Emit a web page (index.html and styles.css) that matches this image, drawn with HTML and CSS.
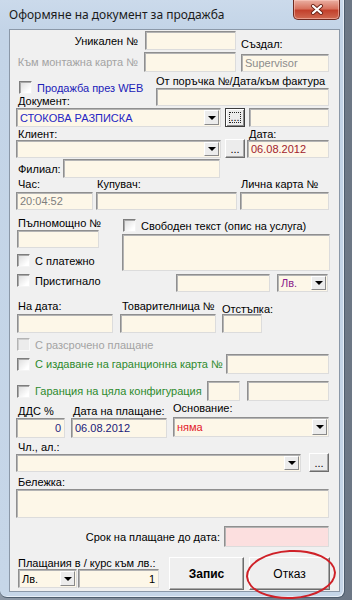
FILE: index.html
```html
<!DOCTYPE html>
<html lang="bg">
<head>
    <meta charset="UTF-8">
    <title>Оформяне на документ за продажба</title>
    <link rel="stylesheet" href="styles.css">
</head>
<body>
    <div class="window">
        <div class="titlebar">
            <span class="title">Оформяне на документ за продажба</span>
            <div class="close-btn">
                <svg width="14" height="11" viewBox="0 0 14 11">
                    <path d="M3 2 L11 9 M11 2 L3 9" stroke="#6b2418" stroke-width="4" stroke-linecap="round"/>
                    <path d="M3 2 L11 9 M11 2 L3 9" stroke="#fff" stroke-width="2.2" stroke-linecap="round"/>
                </svg>
            </div>
        </div>

        <div class="client">
            <div class="row row-unique">
                <span class="lbl lbl-unique">Уникален №</span>
                <div class="inp in-unique"></div>
                <span class="lbl lbl-created">Създал:</span>
            </div>

            <div class="row row-mount">
                <span class="lbl lbl-mount">Към монтажна карта №</span>
                <div class="inp in-mount"></div>
                <div class="inp in-user">Supervisor</div>
            </div>

            <div class="row row-web">
                <div class="web-col">
                    <div class="chk-line chk-web">
                        <span class="chk"></span>
                        <span class="lbl txt-blue">Продажба през WEB</span>
                    </div>
                    <div class="lbl lbl-doc">Документ:</div>
                </div>
                <div class="order-col">
                    <span class="lbl lbl-order">От поръчка №/Дата/към фактура</span>
                    <div class="inp in-order"></div>
                </div>
            </div>

            <div class="row row-doc">
                <div class="inp combo cmb-doc">
                    <span class="combo-text txt-doc">СТОКОВА РАЗПИСКА</span>
                    <span class="combo-arrow"></span>
                </div>
                <div class="btn3d btn-focus btn-doc"><span>...</span></div>
                <div class="inp in-doc"></div>
            </div>

            <div class="row row-lbl row-client-lbl">
                <span class="lbl lbl-client">Клиент:</span>
                <span class="lbl">Дата:</span>
            </div>

            <div class="row row-client">
                <div class="inp combo cmb-client">
                    <span class="combo-text"></span>
                    <span class="combo-arrow"></span>
                </div>
                <div class="btn3d btn-client">...</div>
                <div class="inp in-date">06.08.2012</div>
            </div>

            <div class="row row-branch">
                <span class="lbl lbl-branch">Филиал:</span>
                <div class="inp in-branch"></div>
            </div>

            <div class="row row-lbl">
                <span class="lbl lbl-time">Час:</span>
                <span class="lbl lbl-buyer">Купувач:</span>
                <span class="lbl">Лична карта №</span>
            </div>

            <div class="row row-time">
                <div class="inp in-time">20:04:52</div>
                <div class="inp in-buyer"></div>
                <div class="inp in-id"></div>
            </div>

            <div class="row row-proxy">
                <div class="proxy-col">
                    <div class="lbl lbl-proxy">Пълномощно №</div>
                    <div class="inp in-proxy"></div>
                    <div class="chk-line chk-payment">
                        <span class="chk"></span>
                        <span class="lbl">С платежно</span>
                    </div>
                    <div class="chk-line chk-arrived">
                        <span class="chk"></span>
                        <span class="lbl">Пристигнало</span>
                    </div>
                </div>
                <div class="free-col">
                    <div class="chk-line chk-free">
                        <span class="chk"></span>
                        <span class="lbl">Свободен текст (опис на услуга)</span>
                    </div>
                    <div class="inp txt-free"></div>
                    <div class="row row-amount">
                        <div class="inp in-amount"></div>
                        <div class="inp combo cmb-cur">
                            <span class="combo-text txt-purple">Лв.</span>
                            <span class="combo-arrow"></span>
                        </div>
                    </div>
                </div>
            </div>

            <div class="row row-lbl row-ship-lbl">
                <span class="lbl lbl-ondate">На дата:</span>
                <span class="lbl lbl-waybill">Товарителница №</span>
                <span class="lbl lbl-disc">Отстъпка:</span>
            </div>

            <div class="row row-ship">
                <div class="inp in-ondate"></div>
                <div class="inp in-waybill"></div>
                <div class="inp in-disc"></div>
            </div>

            <div class="row row-install">
                <div class="chk-line">
                    <span class="chk chk-off"></span>
                    <span class="lbl txt-gray">С разсрочено плащане</span>
                </div>
            </div>

            <div class="row row-warranty">
                <div class="chk-line">
                    <span class="chk"></span>
                    <span class="lbl txt-green">С издаване на гаранционна карта №</span>
                </div>
                <div class="inp in-warranty"></div>
            </div>

            <div class="row row-config">
                <div class="chk-line">
                    <span class="chk"></span>
                    <span class="lbl txt-green">Гаранция на цяла конфигурация</span>
                </div>
                <div class="inp in-cfg1"></div>
                <div class="inp in-cfg2"></div>
            </div>

            <div class="row row-lbl row-vat-lbl">
                <span class="lbl lbl-vat">ДДС %</span>
                <span class="lbl lbl-paydate">Дата на плащане:</span>
                <span class="lbl lbl-basis">Основание:</span>
            </div>

            <div class="row row-vat">
                <div class="inp in-vat">0</div>
                <div class="inp in-paydate">06.08.2012</div>
                <div class="inp combo cmb-basis">
                    <span class="combo-text txt-red">няма</span>
                    <span class="combo-arrow"></span>
                </div>
            </div>

            <div class="row row-lbl row-art-lbl">
                <span class="lbl lbl-indent">Чл., ал.:</span>
            </div>

            <div class="row row-art">
                <div class="inp combo cmb-art">
                    <span class="combo-text"></span>
                    <span class="combo-arrow"></span>
                </div>
                <div class="btn3d btn-art">...</div>
            </div>

            <div class="row row-lbl row-note-lbl">
                <span class="lbl lbl-indent">Бележка:</span>
            </div>

            <div class="inp txt-note"></div>

            <div class="row row-due">
                <span class="lbl lbl-due">Срок на плащане до дата:</span>
                <div class="inp in-due"></div>
            </div>

            <div class="row row-bottom">
                <div class="rate-col">
                    <div class="lbl lbl-rate">Плащания в / курс към лв.:</div>
                    <div class="row rate-line">
                        <div class="inp combo cmb-rate">
                            <span class="combo-text">Лв.</span>
                            <span class="combo-arrow"></span>
                        </div>
                        <div class="inp in-rate">1</div>
                    </div>
                </div>
                <div class="btn3d btn-save">Запис</div>
                <div class="btn3d btn-cancel">Отказ</div>
            </div>
        </div>
    </div>

    <div class="mark"></div>
</body>
</html>
```

FILE: styles.css
```css
* {
    margin: 0;
    padding: 0;
    box-sizing: border-box;
}

body {
    width: 352px;
    height: 600px;
    overflow: hidden;
    position: relative;
    background: linear-gradient(90deg, #8d98a6 0%, #6c7785 100%);
    font-family: "Liberation Sans", Arial, sans-serif;
    font-size: 11px;
    color: #000;
}

/* window frame */

.window {
    width: 345px;
    height: 598px;
    background: linear-gradient(180deg, #cbdaeb 0%, #c3d4e7 30px, #c6d6e8 100%);
    border-right: 1px solid #4e5d6d;
    border-bottom: 1px solid #4e5d6d;
    border-radius: 0 0 7px 7px;
    box-shadow: inset -1px -1px 0 #e6eef7;
}

.titlebar {
    height: 29px;
    display: flex;
    align-items: flex-start;
}

.title {
    margin: 6px 0 0 9px;
    font-family: "Noto Sans", "Liberation Sans", sans-serif;
    font-size: 12px;
    color: #1b1b1b;
}

.close-btn {
    margin-left: auto;
    margin-right: 4px;
    width: 47px;
    height: 20px;
    display: flex;
    align-items: center;
    justify-content: center;
    background: linear-gradient(180deg, #eab0a3 0%, #d8735f 45%, #c2412c 55%, #d06a52 100%);
    border: 1px solid #6f2a20;
    border-top: none;
    border-radius: 0 0 5px 5px;
    box-shadow: inset 0 0 0 1px rgba(255, 210, 200, 0.5);
}

.client {
    margin-left: 9px;
    width: 331px;
    height: 563px;
    padding: 0 10px 0 6px;
    background: #f0f0f0;
    border: 1px solid #8b98a8;
}

/* common controls */

.row {
    display: flex;
    align-items: flex-start;
}

.row > *,
.web-col > *,
.proxy-col > *,
.free-col > * {
    flex-shrink: 0;
}

.lbl {
    display: block;
    height: 12px;
    line-height: 12px;
    white-space: nowrap;
}

.inp {
    display: flex;
    align-items: center;
    height: 100%;
    padding: 0 3px;
    background: #fdf7e8;
    border: 1px solid;
    border-color: #8f8f8f #dcdcdc #dcdcdc #8f8f8f;
    box-shadow: inset 1px 1px 0 #b4b4b4;
    white-space: nowrap;
}

.combo {
    padding-right: 1px;
}

.combo-text {
    flex: 1;
}

.combo-arrow {
    width: 15px;
    height: calc(100% - 2px);
    display: flex;
    align-items: center;
    justify-content: center;
    background: #ececec;
    border: 1px solid;
    border-color: #fff #8a8a8a #8a8a8a #fff;
}

.combo-arrow::after {
    content: "";
    border-left: 4px solid transparent;
    border-right: 4px solid transparent;
    border-top: 4px solid #000;
}

.btn3d {
    display: flex;
    align-items: center;
    justify-content: center;
    background: #ececec;
    border: 1px solid;
    border-color: #fff #6d6d6d #6d6d6d #fff;
    box-shadow: inset -1px -1px 0 #a8a8a8;
}

.btn-focus {
    border-color: #3c3c3c;
    box-shadow: inset 1px 1px 0 #fff, inset -1px -1px 0 #8a8a8a;
    padding: 3px;
}

.btn-focus span {
    width: 100%;
    height: 100%;
    display: flex;
    align-items: flex-end;
    justify-content: center;
    line-height: 10px;
    border: 1px dotted #222;
}

.chk-line {
    display: flex;
    align-items: center;
    height: 13px;
}

.chk {
    display: block;
    width: 13px;
    height: 13px;
    margin-right: 5px;
    background: linear-gradient(135deg, #dcdcdc 0%, #fff 80%);
    border: 1px solid;
    border-color: #7d7d7d #f4f4f4 #f4f4f4 #7d7d7d;
    box-shadow: inset 1px 1px 0 #a9a9a9;
}

.chk-off {
    background: #ececec;
    border-color: #b4b4b4 #f8f8f8 #f8f8f8 #b4b4b4;
    box-shadow: inset 1px 1px 0 #cfcfcf;
}

.txt-blue { color: #2020b8; }
.txt-doc { color: #2626c4; }
.txt-gray { color: #a3a3a3; }
.txt-green { color: #2d8a2d; }
.txt-purple { color: #8b1c8b; }
.txt-red { color: #e2202a; }

/* rows */

.row-lbl {
    height: 12px;
}

.row-unique {
    margin-top: 1px;
    height: 19px;
}

.lbl-unique {
    width: 122px;
    text-align: right;
    align-self: center;
}

.in-unique {
    width: 91px;
    margin-left: 7px;
}

.lbl-created {
    margin-left: 5px;
    align-self: flex-end;
}

.row-mount {
    margin-top: 2px;
    height: 20px;
}

.lbl-mount {
    width: 122px;
    text-align: right;
    align-self: center;
    color: #a3a3a3;
}

.in-mount {
    width: 92px;
    margin-left: 6px;
}

.in-user {
    width: 88px;
    height: 18px;
    margin: 2px 0 0 5px;
    color: #8c8c8c;
}

.row-web {
    margin-top: 3px;
    height: 31px;
}

.web-col {
    width: 140px;
}

.chk-web {
    margin: 6px 0 0 3px;
}

.lbl-doc {
    margin: 1px 0 0 2px;
}

.order-col {
    width: 173px;
}

.lbl-order {
    height: 13px;
    line-height: 13px;
}

.in-order {
    height: 18px;
}

.row-doc {
    margin-top: 2px;
    height: 19px;
}

.cmb-doc {
    width: 205px;
}

.btn-doc {
    width: 20px;
    height: 100%;
    margin-left: 4px;
}

.in-doc {
    width: 80px;
    margin-left: 4px;
}

.row-client-lbl {
    margin-top: 1px;
}

.lbl-client {
    width: 231px;
    margin-left: 2px;
}

.row-client {
    height: 18px;
}

.cmb-client {
    width: 205px;
}

.btn-client {
    width: 20px;
    height: 19px;
    margin: -1px 0 0 4px;
    align-items: flex-end;
    line-height: 12px;
    padding-bottom: 2px;
}

.in-date {
    width: 82px;
    margin-left: 2px;
    color: #a1222c;
}

.row-branch {
    margin-top: 1px;
    height: 19px;
}

.lbl-branch {
    width: 45px;
    padding-left: 2px;
    align-self: center;
}

.in-branch {
    width: 157px;
    margin-left: 2px;
}

.lbl-time {
    width: 79px;
    margin-left: 2px;
}

.lbl-buyer {
    width: 144px;
}

.row-time {
    margin-top: 2px;
    height: 18px;
}

.in-time {
    width: 77px;
    color: #7d7d7d;
}

.in-buyer {
    width: 141px;
    margin-left: 3px;
}

.in-id {
    width: 89px;
    margin-left: 3px;
}

.row-proxy {
    height: 82px;
}

.proxy-col {
    width: 106px;
}

.lbl-proxy {
    margin: 7px 0 0 2px;
}

.in-proxy {
    width: 82px;
    height: 18px;
    margin: 1px 0 0 1px;
}

.chk-payment {
    margin: 6px 0 0 1px;
}

.chk-arrived {
    margin: 7px 0 0 1px;
}

.free-col {
    width: 208px;
}

.chk-free {
    margin: 9px 0 0 1px;
}

.txt-free {
    width: 208px;
    height: 37px;
    margin-top: 2px;
}

.row-amount {
    margin-top: 3px;
    height: 18px;
}

.in-amount {
    width: 94px;
    margin-left: 54px;
}

.cmb-cur {
    width: 51px;
    margin-left: 7px;
}

.row-ship-lbl {
    margin-top: 8px;
}

.lbl-ondate {
    width: 104px;
    margin-left: 2px;
}

.lbl-waybill {
    width: 100px;
}

.lbl-disc {
    margin-top: 3px;
}

.row-ship {
    margin-top: 2px;
    height: 19px;
}

.in-ondate {
    width: 96px;
    margin-left: 1px;
}

.in-waybill {
    width: 96px;
    margin-left: 7px;
}

.in-disc {
    width: 40px;
    margin-left: 6px;
}

.row-install {
    margin-top: 5px;
    height: 13px;
    padding-left: 1px;
}

.row-warranty {
    margin-top: 3px;
    height: 20px;
    align-items: center;
    padding-left: 1px;
}

.in-warranty {
    width: 103px;
    margin-left: auto;
}

.row-config {
    margin-top: 7px;
    height: 20px;
    align-items: center;
    padding-left: 1px;
}

.in-cfg1 {
    width: 33px;
    margin-left: auto;
}

.in-cfg2 {
    width: 82px;
    margin-left: 7px;
}

.row-vat-lbl {
    margin-top: 4px;
}

.lbl-vat {
    width: 55px;
    margin-left: 2px;
}

.lbl-paydate {
    width: 100px;
}

.lbl-basis {
    margin-top: -3px;
}

.row-vat {
    margin-top: 1px;
    height: 20px;
}

.in-vat {
    width: 49px;
    justify-content: flex-end;
    color: #26267e;
}

.in-paydate {
    width: 96px;
    margin-left: 6px;
    color: #20207a;
}

.cmb-basis {
    width: 156px;
    margin: -1px 0 0 6px;
}

.row-art-lbl {
    margin-top: 3px;
}

.lbl-indent {
    margin-left: 2px;
}

.row-art {
    margin-top: 1px;
    height: 18px;
}

.cmb-art {
    width: 285px;
}

.btn-art {
    width: 20px;
    height: 19px;
    margin: -1px 0 0 8px;
    align-items: flex-end;
    line-height: 12px;
    padding-bottom: 2px;
}

.row-note-lbl {
    margin-top: 4px;
}

.txt-note {
    width: 313px;
    height: 29px;
    margin-top: 1px;
}

.row-due {
    margin-top: 8px;
    height: 21px;
}

.lbl-due {
    width: 204px;
    text-align: right;
    align-self: center;
}

.in-due {
    width: 105px;
    margin-left: 4px;
    background: #fcdfdf;
}

.row-bottom {
    margin-top: 9px;
    height: 34px;
}

.rate-col {
    width: 153px;
}

.lbl-rate {
    margin: 1px 0 0 2px;
}

.rate-line {
    height: 19px;
    margin-left: 2px;
}

.cmb-rate {
    width: 59px;
}

.in-rate {
    width: 81px;
    margin-left: 1px;
    justify-content: flex-end;
}

.btn-save,
.btn-cancel {
    height: 33px;
    margin-top: 1px;
    font-size: 12px;
    background: #efefef;
}

.btn-save {
    width: 75px;
    font-weight: bold;
}

.btn-cancel {
    width: 81px;
    margin-left: 5px;
}

/* hand-drawn mark over the cancel button */
.mark {
    position: absolute;
    left: 246px;
    top: 550px;
    width: 90px;
    height: 49px;
    border: 2px solid #cf2128;
    border-radius: 50%;
    transform: rotate(-3deg);
}
```
